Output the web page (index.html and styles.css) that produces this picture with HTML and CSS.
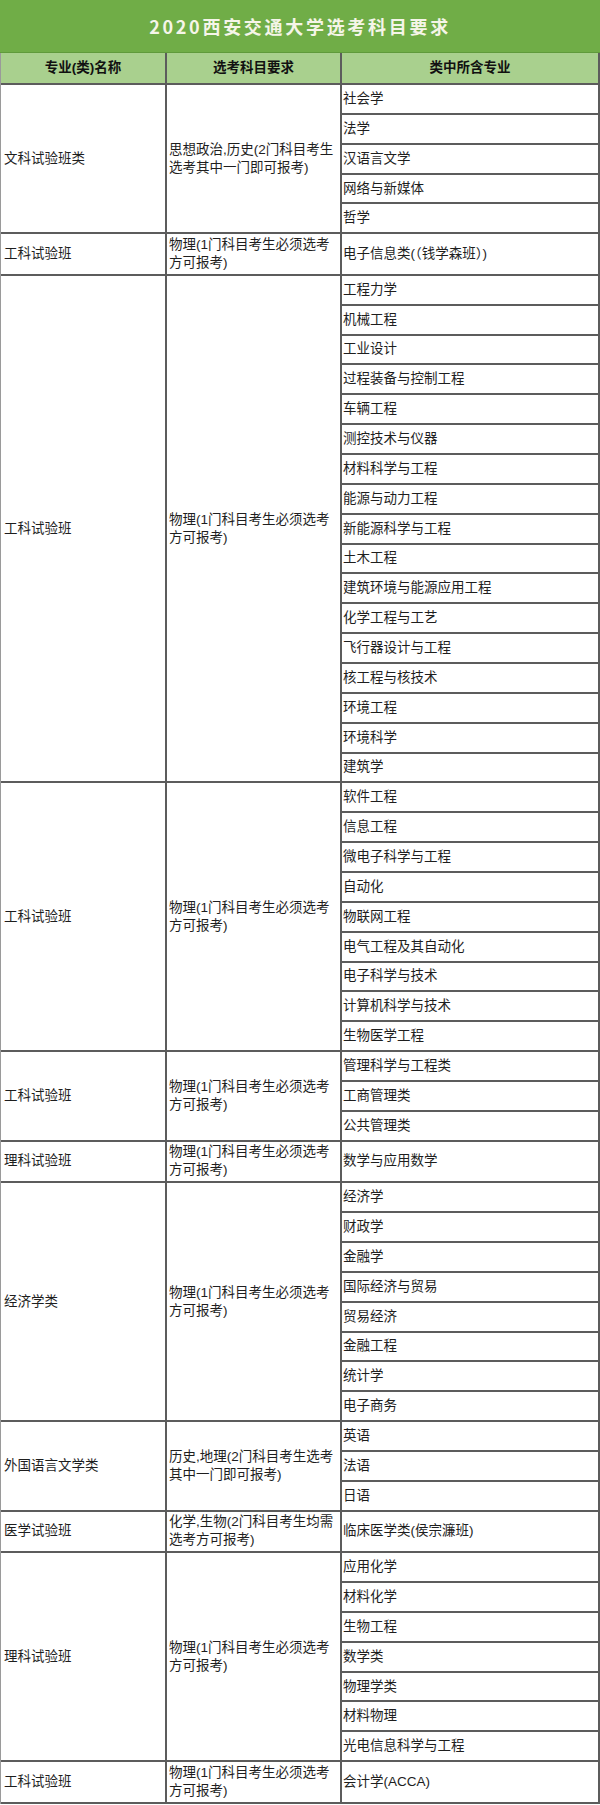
FILE: index.html
```html
<!DOCTYPE html>
<html lang="zh-CN">
<head>
<meta charset="utf-8">
<title>2020西安交通大学选考科目要求</title>
<link rel="stylesheet" href="styles.css">
</head>
<body>
<div class="sheet">
  <div class="title">2020西安交通大学选考科目要求</div>
  <div class="grid">
    <div class="hd c1">专业(类)名称</div>
    <div class="hd c2">选考科目要求</div>
    <div class="hd c3">类中所含专业</div>

    <div class="c1 span5">文科试验班类</div>
    <div class="c2 span5">思想政治,历史(2门科目考生<br>选考其中一门即可报考)</div>
    <div class="c3">社会学</div>
    <div class="c3">法学</div>
    <div class="c3">汉语言文学</div>
    <div class="c3">网络与新媒体</div>
    <div class="c3">哲学</div>

    <div class="c1">工科试验班</div>
    <div class="c2">物理(1门科目考生必须选考<br>方可报考)</div>
    <div class="c3 tall">电子信息类(（钱学森班）)</div>

    <div class="c1 span17">工科试验班</div>
    <div class="c2 span17">物理(1门科目考生必须选考<br>方可报考)</div>
    <div class="c3">工程力学</div>
    <div class="c3">机械工程</div>
    <div class="c3">工业设计</div>
    <div class="c3">过程装备与控制工程</div>
    <div class="c3">车辆工程</div>
    <div class="c3">测控技术与仪器</div>
    <div class="c3">材料科学与工程</div>
    <div class="c3">能源与动力工程</div>
    <div class="c3">新能源科学与工程</div>
    <div class="c3">土木工程</div>
    <div class="c3">建筑环境与能源应用工程</div>
    <div class="c3">化学工程与工艺</div>
    <div class="c3">飞行器设计与工程</div>
    <div class="c3">核工程与核技术</div>
    <div class="c3">环境工程</div>
    <div class="c3">环境科学</div>
    <div class="c3">建筑学</div>

    <div class="c1 span9">工科试验班</div>
    <div class="c2 span9">物理(1门科目考生必须选考<br>方可报考)</div>
    <div class="c3">软件工程</div>
    <div class="c3">信息工程</div>
    <div class="c3">微电子科学与工程</div>
    <div class="c3">自动化</div>
    <div class="c3">物联网工程</div>
    <div class="c3">电气工程及其自动化</div>
    <div class="c3">电子科学与技术</div>
    <div class="c3">计算机科学与技术</div>
    <div class="c3">生物医学工程</div>

    <div class="c1 span3">工科试验班</div>
    <div class="c2 span3">物理(1门科目考生必须选考<br>方可报考)</div>
    <div class="c3">管理科学与工程类</div>
    <div class="c3">工商管理类</div>
    <div class="c3">公共管理类</div>

    <div class="c1">理科试验班</div>
    <div class="c2">物理(1门科目考生必须选考<br>方可报考)</div>
    <div class="c3 tall">数学与应用数学</div>

    <div class="c1 span8">经济学类</div>
    <div class="c2 span8">物理(1门科目考生必须选考<br>方可报考)</div>
    <div class="c3">经济学</div>
    <div class="c3">财政学</div>
    <div class="c3">金融学</div>
    <div class="c3">国际经济与贸易</div>
    <div class="c3">贸易经济</div>
    <div class="c3">金融工程</div>
    <div class="c3">统计学</div>
    <div class="c3">电子商务</div>

    <div class="c1 span3">外国语言文学类</div>
    <div class="c2 span3">历史,地理(2门科目考生选考<br>其中一门即可报考)</div>
    <div class="c3">英语</div>
    <div class="c3">法语</div>
    <div class="c3">日语</div>

    <div class="c1">医学试验班</div>
    <div class="c2">化学,生物(2门科目考生均需<br>选考方可报考)</div>
    <div class="c3 tall">临床医学类(侯宗濂班)</div>

    <div class="c1 span7">理科试验班</div>
    <div class="c2 span7">物理(1门科目考生必须选考<br>方可报考)</div>
    <div class="c3">应用化学</div>
    <div class="c3">材料化学</div>
    <div class="c3">生物工程</div>
    <div class="c3">数学类</div>
    <div class="c3">物理学类</div>
    <div class="c3">材料物理</div>
    <div class="c3">光电信息科学与工程</div>

    <div class="c1">工科试验班</div>
    <div class="c2">物理(1门科目考生必须选考<br>方可报考)</div>
    <div class="c3 tall">会计学(ACCA)</div>
  </div>
</div>
</body>
</html>
```

FILE: styles.css
```css
html, body {
  margin: 0;
  padding: 0;
  background: #ffffff;
}

.sheet {
  width: 600px;
  font-family: "Liberation Sans", "Noto Sans CJK SC", sans-serif;
  color: #1e1e1e;
}

.title {
  height: 53px;
  box-sizing: border-box;
  border-bottom: 1px solid #5f9a3b;
  background: #70ad47;
  color: #f5f5e8;
  display: flex;
  align-items: center;
  justify-content: center;
  font-family: "Noto Sans CJK SC", sans-serif;
  font-weight: 700;
  font-size: 18px;
  letter-spacing: 2.7px;
}

.grid {
  display: grid;
  grid-template-columns: 164px 173px 256px;
  grid-template-rows: 30px;
  grid-auto-rows: minmax(27.87px, auto);
  gap: 2px;
  background: #5c5c5c;
  border-left: 1px solid #9a9a9a;
  padding: 0 2px 2px 0;
}

.grid > div {
  background: #ffffff;
  display: flex;
  align-items: center;
  font-size: 13.5px;
  line-height: 18px;
  white-space: nowrap;
}

.c1 { grid-column: 1; padding-left: 3px; }
.c2 { grid-column: 2; padding-left: 2px; }
.c3 { grid-column: 3; padding-left: 1px; }

.grid > .hd {
  background: #a9d08e;
  justify-content: center;
  padding-left: 0;
  font-weight: 700;
  color: #111111;
  font-size: 13.5px;
}

.grid > .tall { min-height: 39.5px; }

.span3 { grid-row: span 3; }
.span5 { grid-row: span 5; }
.span7 { grid-row: span 7; }
.span8 { grid-row: span 8; }
.span9 { grid-row: span 9; }
.span17 { grid-row: span 17; }
```
